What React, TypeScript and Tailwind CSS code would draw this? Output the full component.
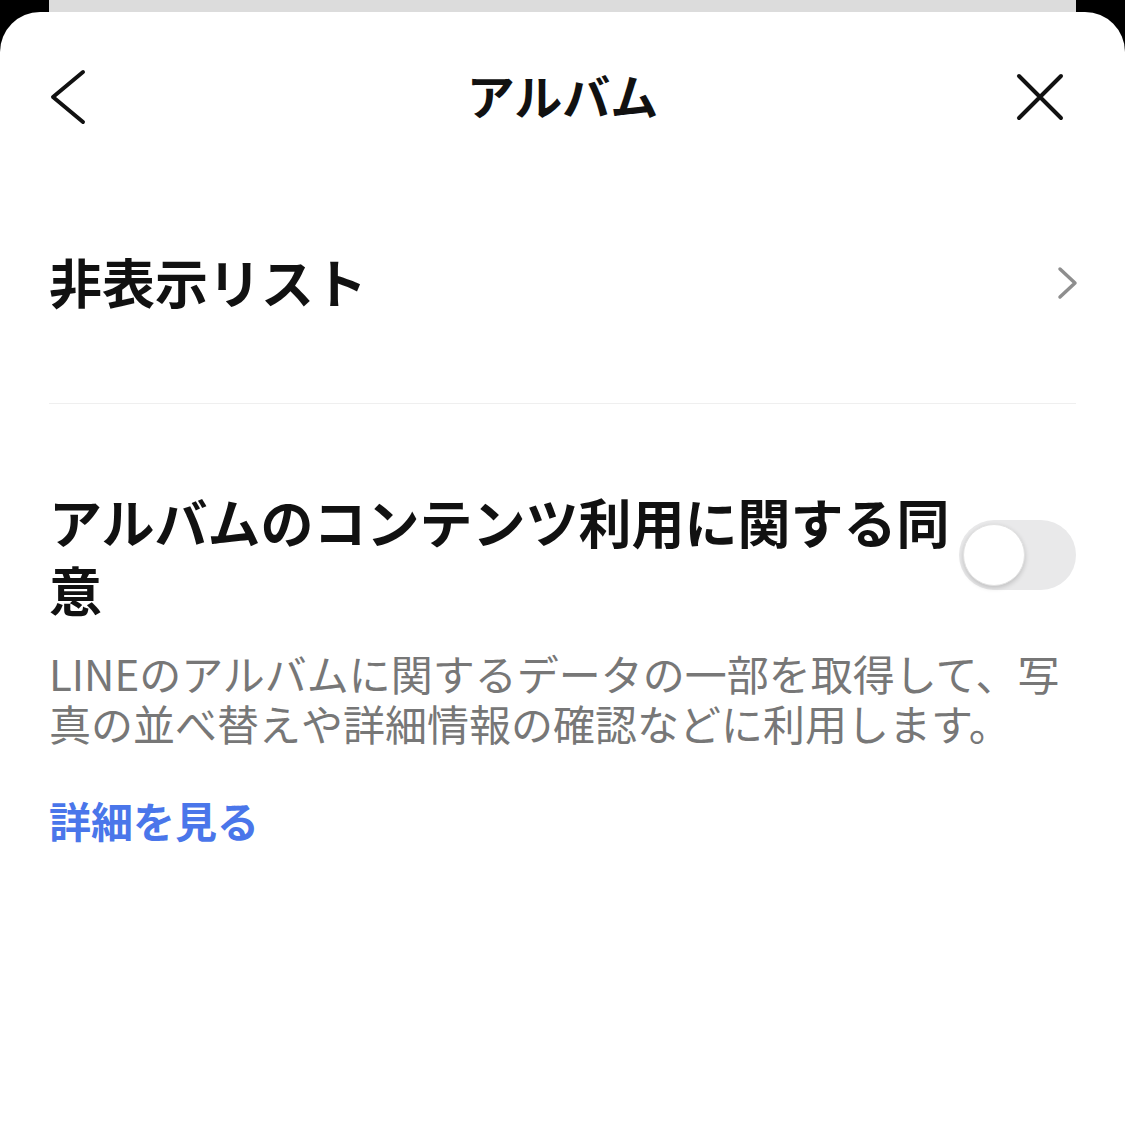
import React from "react";

const jp = { fontFamily: '"Noto Sans CJK JP", "Noto Sans", sans-serif' };

function BackIcon() {
  return (
    <svg width="40" height="56" viewBox="0 0 40 56" fill="none">
      <polyline
        points="34,3 4,28 34,53"
        stroke="#111"
        strokeWidth="4"
        strokeLinecap="round"
        strokeLinejoin="round"
      />
    </svg>
  );
}

function CloseIcon() {
  return (
    <svg width="48" height="48" viewBox="0 0 48 48" fill="none">
      <path d="M3 3 L45 45 M45 3 L3 45" stroke="#111" strokeWidth="4" strokeLinecap="round" />
    </svg>
  );
}

function ChevronRight() {
  return (
    <svg width="22" height="34" viewBox="0 0 22 34" fill="none">
      <polyline
        points="3,3 18,17 3,31"
        stroke="#8e8e8e"
        strokeWidth="3.5"
        strokeLinecap="round"
        strokeLinejoin="round"
      />
    </svg>
  );
}

export default function App() {
  const [on, setOn] = React.useState(false);

  return (
    <div className="w-[1125px] h-[1139px] bg-black overflow-hidden" style={jp}>
      {/* card behind */}
      <div className="mx-[49px] h-[12px] bg-[#dcdcdc]" />

      {/* sheet */}
      <div className="bg-white rounded-t-[40px] h-[1127px] px-[49px]">
        {/* header */}
        <div className="h-[170px] pb-[6px] grid grid-cols-[1fr_auto_1fr] items-center">
          <div className="flex items-center mt-[6px]">
            <BackIcon />
          </div>
          <h1 className="text-[48px] font-bold text-[#111] leading-none">アルバム</h1>
          <div className="flex items-center justify-end mr-[12px] mt-[5px]">
            <CloseIcon />
          </div>
        </div>

        {/* hidden list */}
        <div className="pt-[63px] pb-[86px] flex items-center justify-between">
          <span className="text-[53px] leading-[72px] font-bold text-[#111]">非表示リスト</span>
          <div className="mr-[-3px] mt-[4px]">
            <ChevronRight />
          </div>
        </div>
        <div className="h-px bg-[#efefef]" />

        {/* consent */}
        <div className="pt-[83px] flex items-center justify-between">
          <h2 className="w-[905px] shrink-0 text-[53px] leading-[68px] font-bold text-[#111]">
            アルバムのコンテンツ利用に関する同意
          </h2>
          <button
            onClick={() => setOn(!on)}
            className={
              "w-[117px] h-[70px] rounded-full p-[4px] flex shrink-0 " +
              (on ? "bg-[#06c755] justify-end" : "bg-[#e9e9ea] justify-start")
            }
          >
            <span className="w-[62px] h-[62px] rounded-full bg-white shadow-[0_2px_5px_rgba(0,0,0,0.18)] border border-[#e2e2e2]" />
          </button>
        </div>

        <p className="mt-[25px] text-[42px] leading-[50px] text-[#777777]">
          LINEのアルバムに関するデータの一部を取得して、写真の並べ替えや詳細情報の確認などに利用します。
        </p>

        <p className="mt-[47px] text-[42px] leading-[50px] font-bold text-[#4a76ea]">詳細を見る</p>
      </div>
    </div>
  );
}
